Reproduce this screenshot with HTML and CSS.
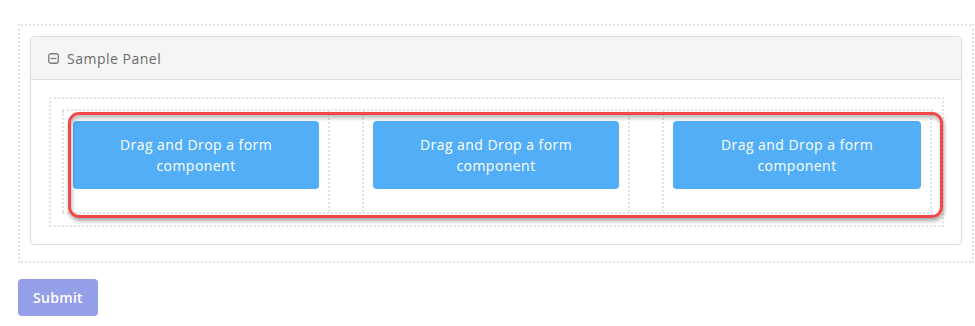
FILE: index.html
```html
<!DOCTYPE html>
<html>
<head>
<meta charset="utf-8">
<link rel="stylesheet" href="styles.css">
</head>
<body>
<div class="form-wrap">
  <div class="builder-box">
    <div class="panel">
      <div class="panel-heading">
        <svg class="collapse-icon" width="11" height="11" viewBox="0 0 11 11" aria-hidden="true">
          <rect x="0.75" y="0.75" width="9.5" height="9.5" rx="2" fill="none" stroke="#7b7b7b" stroke-width="1.3"/>
          <line x1="2.6" y1="5.5" x2="8.4" y2="5.5" stroke="#7b7b7b" stroke-width="1.3"/>
        </svg>
        <span class="panel-title">Sample Panel</span>
      </div>
      <div class="panel-body">
        <div class="columns-box">
          <div class="columns-row">
            <div class="col"><div class="drop-btn">Drag and Drop a form component</div></div>
            <div class="col"><div class="drop-btn">Drag and Drop a form component</div></div>
            <div class="col"><div class="drop-btn">Drag and Drop a form component</div></div>
          </div>
          <div class="highlight"></div>
        </div>
      </div>
    </div>
  </div>
  <button class="submit-btn" type="button">Submit</button>
</div>
</body>
</html>
```
FILE: styles.css
```css
html, body {
  margin: 0;
  padding: 0;
  background: #ffffff;
}
body {
  font-family: "Open Sans", "Noto Sans", sans-serif;
  font-size: 14px;
  color: #333;
}
.form-wrap {
  padding: 24px 0 0 18px;
}
.builder-box {
  width: 956px;
  box-sizing: border-box;
  border: 2px dotted #e2e2e2;
  padding: 10px 10px 16px 10px;
}
.panel {
  border: 1px solid #dcdcdc;
  border-radius: 4px;
  background: #fff;
}
.panel-heading {
  display: flex;
  align-items: center;
  height: 43px;
  box-sizing: border-box;
  padding: 0 17px;
  background: #f5f5f5;
  border-bottom: 1px solid #dcdcdc;
  border-radius: 4px 4px 0 0;
}
.collapse-icon {
  margin-right: 8px;
  flex: none;
}
.panel-title {
  color: #6b6b6b;
  font-size: 14px;
  letter-spacing: 0.5px;
}
.panel-body {
  padding: 17px 17px 17px 18px;
}
.columns-box {
  position: relative;
  border: 2px dotted #e2e2e2;
  padding: 10px 9px 11px 11px;
}
.columns-row {
  display: grid;
  grid-template-columns: 268px 268px 270px;
  column-gap: 32px;
  border-top: 2px dotted #e2e2e2;
  border-bottom: 2px dotted #e2e2e2;
}
.col {
  padding: 10px 9px 23px;
  box-sizing: border-box;
  border-left: 2px dotted #e2e2e2;
  border-right: 2px dotted #e2e2e2;
}
.drop-btn {
  background: #52aef7;
  color: #ffffff;
  border-radius: 4px;
  text-align: center;
  font-size: 14px;
  line-height: 21px;
  letter-spacing: 0.45px;
  padding: 13px 24px;
  box-sizing: border-box;
  height: 68px;
}
.highlight {
  position: absolute;
  left: 17px;
  top: 13px;
  width: 875px;
  height: 106px;
  box-sizing: border-box;
  border: 3px solid #f04848;
  border-radius: 11px;
  box-shadow: 1px 3px 4px rgba(0, 0, 0, 0.35), inset 1px 3px 4px rgba(0, 0, 0, 0.28);
  pointer-events: none;
}
.submit-btn {
  display: block;
  margin-top: 16px;
  width: 80px;
  height: 37px;
  border: none;
  border-radius: 4px;
  background: #959ee9;
  color: #ffffff;
  font-family: "Open Sans", "Noto Sans", sans-serif;
  font-size: 14px;
  font-weight: 600;
  letter-spacing: 0.3px;
  padding: 0;
}
```
